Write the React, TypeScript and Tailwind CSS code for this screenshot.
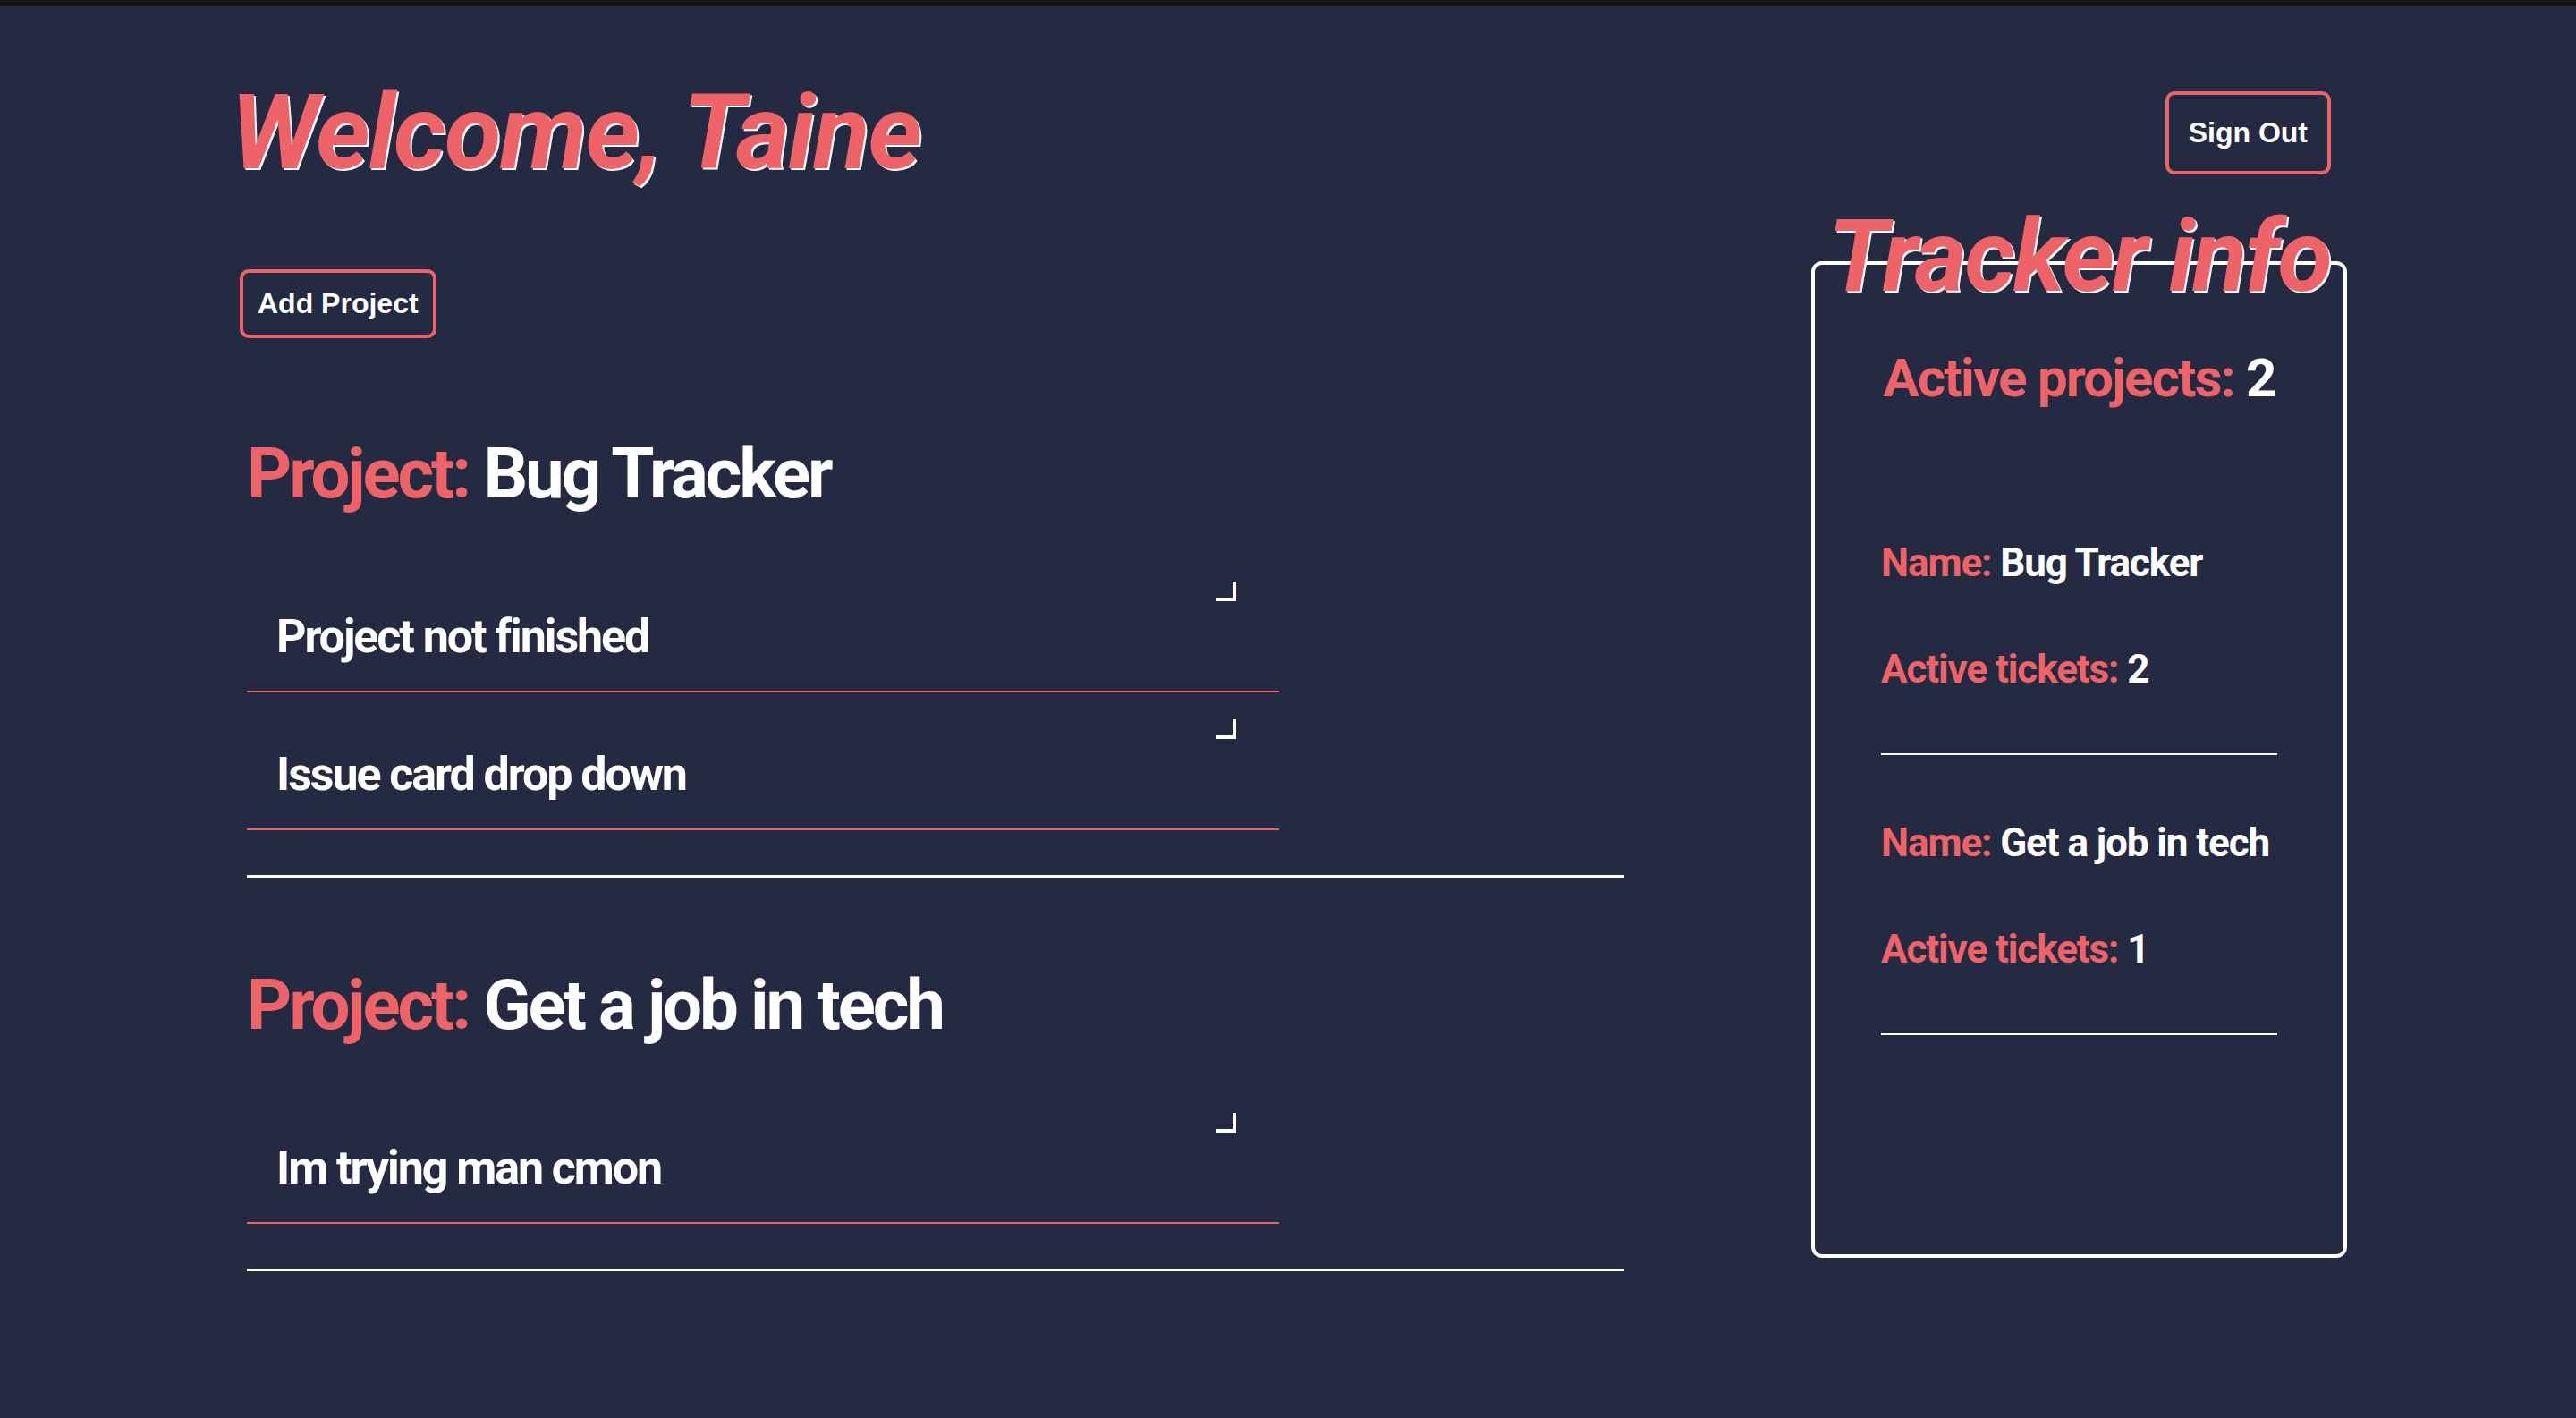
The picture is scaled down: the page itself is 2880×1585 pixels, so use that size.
import React from 'react';

const coral = 'text-[#ee6368]';

interface Issue {
  title: string;
}

interface Project {
  name: string;
  issues: Issue[];
}

const projects: Project[] = [
  { name: 'Bug Tracker', issues: [{ title: 'Project not finished' }, { title: 'Issue card drop down' }] },
  { name: 'Get a job in tech', issues: [{ title: 'Im trying man cmon' }] },
];

function IssueRow({ issue }: { issue: Issue }) {
  return (
    <div className="w-[1154px] h-[154px] flex justify-between items-start border-b-2 border-[#ee6368] pl-[33px] pr-[48px]">
      <span className="mt-[66px] text-[52px] leading-none font-bold tracking-[-0.04em] text-white">{issue.title}</span>
      <span className="mt-[30px] w-[22px] h-[22px] border-r-4 border-b-4 border-white" />
    </div>
  );
}

function ProjectSection({ project, first }: { project: Project; first: boolean }) {
  return (
    <section className={`ml-[8px] ${first ? 'mt-[113px]' : 'mt-[104px]'}`}>
      <h2 className="text-[78px] leading-none font-bold tracking-[-0.04em] whitespace-nowrap">
        <span className={coral}>Project: </span>
        <span className="text-white">{project.name}</span>
      </h2>
      <div className="mt-[51px] flex flex-col">
        {project.issues.map((issue) => (
          <IssueRow key={issue.title} issue={issue} />
        ))}
      </div>
      <div className="mt-[50px] w-[1540px] h-[3px] bg-white" />
    </section>
  );
}

export default function App() {
  return (
    <div className="w-full min-h-[1585px] bg-[#242a41] font-['Roboto',sans-serif]">
      <div className="h-[7px] bg-[#161616]" />

      <header className="flex justify-between items-center pl-[258px] pr-[274px] pt-[83px]">
        <h1 className={`text-[116px] leading-none font-bold italic tracking-[-0.015em] ${coral} [text-shadow:2px_2px_0_#fff]`}>
          Welcome, Taine
        </h1>
        <button className="px-[22px] py-[24px] border-4 border-[#ee6368] rounded-[10px] text-white font-bold text-[32px] leading-[37px] font-['Liberation_Sans',Arial,sans-serif]">
          Sign Out
        </button>
      </header>

      <main className="flex justify-between pl-[268px] pr-[256px]">
        <div className="flex flex-col items-start">
          <button className="mt-[95px] px-[16px] py-[16px] border-4 border-[#ee6368] rounded-[10px] text-white font-bold text-[32px] leading-[37px] font-['Liberation_Sans',Arial,sans-serif]">
            Add Project
          </button>
          {projects.map((p, i) => (
            <ProjectSection key={p.name} project={p} first={i === 0} />
          ))}
        </div>

        <aside className="mt-[86px] w-[599px] h-[1114px] border-4 border-white rounded-[12px] flex flex-col items-center px-[71px]">
          <h1 className={`-mt-[65px] text-[112px] leading-none font-bold italic whitespace-nowrap tracking-[-0.02em] ${coral} [text-shadow:2px_2px_0_#fff]`}>
            Tracker info
          </h1>
          <p className="mt-[50px] text-[60px] leading-none font-bold whitespace-nowrap tracking-[-0.03em]">
            <span className={coral}>Active projects: </span>
            <span className="text-white">{projects.length}</span>
          </p>
          <ul className="mt-[78px] self-stretch flex flex-col px-[3px]">
            {projects.map((p) => (
              <li key={p.name} className="pb-[72px] border-b-2 border-white">
                <p className="mt-[76px] text-[44px] leading-none font-bold whitespace-nowrap tracking-[-0.025em]">
                  <span className={coral}>Name: </span>
                  <span className="text-white">{p.name}</span>
                </p>
                <p className="mt-[75px] text-[44px] leading-none font-bold whitespace-nowrap tracking-[-0.025em]">
                  <span className={coral}>Active tickets: </span>
                  <span className="text-white">{p.issues.length}</span>
                </p>
              </li>
            ))}
          </ul>
        </aside>
      </main>
    </div>
  );
}
